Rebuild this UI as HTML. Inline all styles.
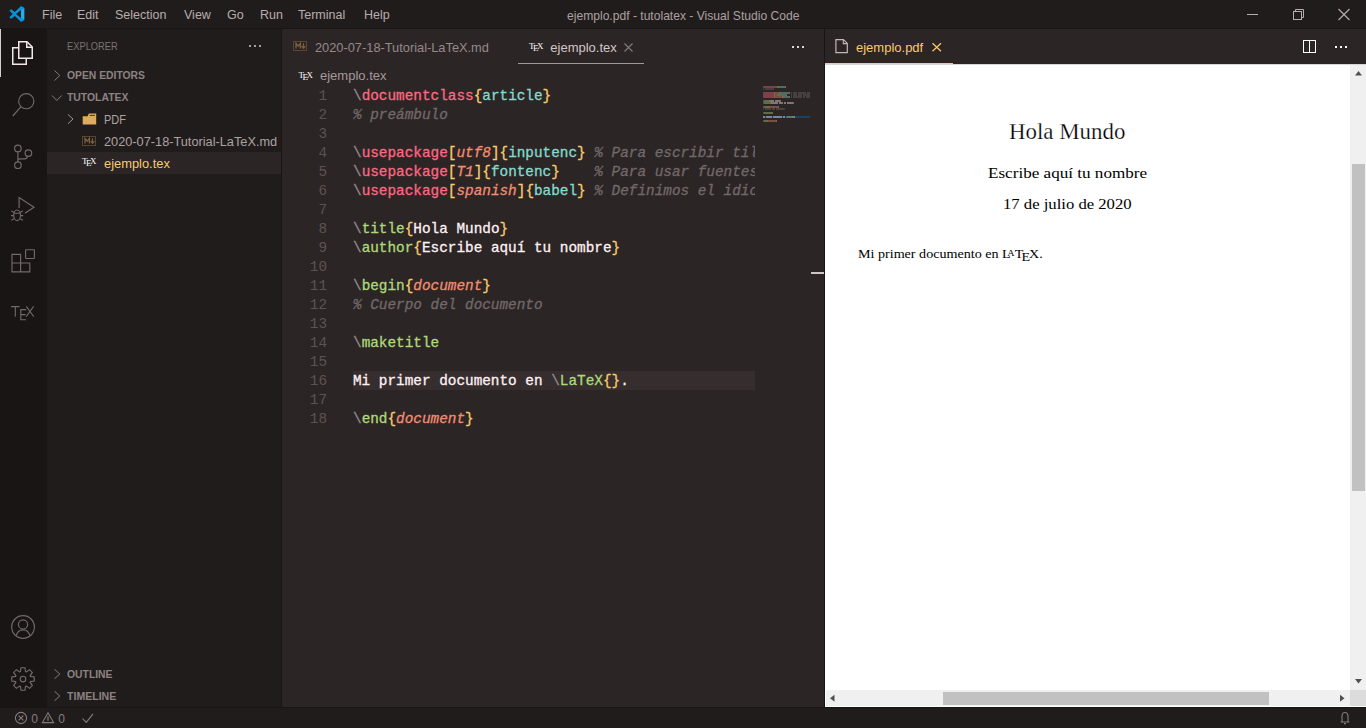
<!DOCTYPE html>
<html><head><meta charset="utf-8">
<style>
*{margin:0;padding:0;box-sizing:border-box}
html,body{width:1366px;height:728px;overflow:hidden;background:#211c1c;font-family:"Liberation Sans",sans-serif;}
.a{position:absolute;white-space:pre}
.mono{font-family:"Liberation Mono",monospace}
.cb .mono{-webkit-text-stroke:0.3px currentColor}
.serif{font-family:"Liberation Serif",serif}
svg{position:absolute;overflow:visible}
</style></head><body>
<!-- title bar -->
<div class="a" style="left:0;top:0;width:1366px;height:28px;background:#211c1c"></div>
<div class="a" style="left:0;top:28px;width:1366px;height:1px;background:#191515"></div>
<!-- activity bar -->
<div class="a" style="left:0;top:29px;width:47px;height:678px;background:#191515"></div>
<!-- sidebar -->
<div class="a" style="left:47px;top:29px;width:234px;height:678px;background:#211c1c"></div>
<div class="a" style="left:281px;top:29px;width:1px;height:678px;background:#191515"></div>
<!-- editor group 1 -->
<div class="a" style="left:282px;top:29px;width:542px;height:678px;background:#2c2525"></div>
<div class="a" style="left:824px;top:29px;width:1px;height:678px;background:#191515"></div>
<!-- editor group 2 -->
<div class="a" style="left:825px;top:29px;width:541px;height:35px;background:#2c2525"></div>
<div class="a" style="left:825px;top:64px;width:541px;height:643px;background:#ffffff"></div>
<!-- status bar -->
<div class="a" style="left:0;top:707px;width:1366px;height:1px;background:#191515"></div>
<div class="a" style="left:0;top:708px;width:1366px;height:20px;background:#211c1c"></div>

<!-- TITLE CONTENT -->
<svg style="left:9px;top:6px" width="16" height="16" viewBox="0 0 100 100">
 <path d="M74 2 L96 12 V88 L74 98 Z" fill="#23aef0"/>
 <path d="M74 2 L96 12 L36 62 L14 79 L4 73 L4 68 Z" fill="#0a93db"/>
 <path d="M74 98 L96 88 L36 38 L14 21 L4 27 L4 32 Z" fill="#0c8fd6"/>
 <path d="M74 25 L74 75 L44 50 Z" fill="#211c1c"/>
</svg>
<div class="a" style="left:42px;top:8px;font-size:12.5px;color:#b8adae">File</div>
<div class="a" style="left:77px;top:8px;font-size:12.5px;color:#b8adae">Edit</div>
<div class="a" style="left:115px;top:8px;font-size:12.5px;color:#b8adae">Selection</div>
<div class="a" style="left:184px;top:8px;font-size:12.5px;color:#b8adae">View</div>
<div class="a" style="left:227px;top:8px;font-size:12.5px;color:#b8adae">Go</div>
<div class="a" style="left:260px;top:8px;font-size:12.5px;color:#b8adae">Run</div>
<div class="a" style="left:298px;top:8px;font-size:12.5px;color:#b8adae">Terminal</div>
<div class="a" style="left:364px;top:8px;font-size:12.5px;color:#b8adae">Help</div>
<div class="a" style="left:567px;top:9px;font-size:12.1px;color:#aca1a2">ejemplo.pdf - tutolatex - Visual Studio Code</div>
<div class="a" style="left:1247px;top:14px;width:11px;height:1px;background:#b8adae"></div>
<svg style="left:1292px;top:8px" width="13" height="13" viewBox="0 0 13 13" fill="none" stroke="#b8adae" stroke-width="1">
 <rect x="1.5" y="3.5" width="8" height="8"/><path d="M3.5 3.5 V1.5 H11.5 V9.5 H9.5"/>
</svg>
<svg style="left:1338px;top:9px" width="12" height="11" viewBox="0 0 12 11" stroke="#b8adae" stroke-width="1.1">
 <path d="M0.5 0 L11.5 11 M11.5 0 L0.5 11"/>
</svg>

<!-- ACTIVITY BAR -->
<div class="a" style="left:0;top:29px;width:1px;height:48px;background:#d8cdce"></div>
<svg style="left:0;top:0" width="47" height="728" viewBox="0 0 47 728" fill="none" stroke-linejoin="miter">
 <g stroke="#f4e6e8" stroke-width="1.5">
  <path d="M18.75 41.75 H27 L32.25 47 V58.25 H18.75 Z"/>
  <path d="M26.75 42 V47.25 H32"/>
  <path d="M18.75 47.75 H12.75 V64.25 H26.25 V58.5"/>
 </g>
 <g stroke="#74696b" stroke-width="1.15">
  <circle cx="26.25" cy="101.2" r="7.6"/>
  <path d="M20.8 106.8 L12.8 116"/>
  <circle cx="17.9" cy="148.4" r="3.3"/>
  <circle cx="17.9" cy="165.2" r="3.3"/>
  <circle cx="28.4" cy="153.1" r="3.3"/>
  <path d="M17.9 151.7 V161.9"/>
  <path d="M17.9 159.6 Q18.5 158.8 20.5 158.8 H24.5 Q27 158.8 27.6 156.3"/>
  <path d="M19.1 208 V197.6 L34 207.2 L24.9 213.2"/>
  <ellipse cx="17.1" cy="215.3" rx="3.4" ry="5.3"/>
  <path d="M13.8 213.2 H20.4 M11.3 211 L14 212.3 M22.9 211 L20.2 212.3 M11 215.6 H13.7 M23.2 215.6 H20.5 M11.3 220.3 L14 218.8 M22.9 220.3 L20.2 218.8"/>
  <rect x="25.6" y="249.7" width="8.8" height="8.8" rx="0.8"/>
  <path d="M12 254.3 H20.6 V271.8 H12 Z M12 263 H29.8 V271.8 H20.6"/>
  <circle cx="23.05" cy="627" r="11.35"/>
  <circle cx="23.05" cy="624.4" r="4.6"/>
  <path d="M16.2 635.6 Q17.8 629.8 23.05 629.8 Q28.3 629.8 29.9 635.6"/>
  <path d="M20.43 671.53 L21.02 667.77 L24.98 667.77 L25.57 671.53 L26.46 671.90 L29.54 669.66 L32.34 672.46 L30.10 675.54 L30.47 676.43 L34.23 677.02 L34.23 680.98 L30.47 681.57 L30.10 682.46 L32.34 685.54 L29.54 688.34 L26.46 686.10 L25.57 686.47 L24.98 690.23 L21.02 690.23 L20.43 686.47 L19.54 686.10 L16.46 688.34 L13.66 685.54 L15.90 682.46 L15.53 681.57 L11.77 680.98 L11.77 677.02 L15.53 676.43 L15.90 675.54 L13.66 672.46 L16.46 669.66 L19.54 671.90 Z"/>
  <circle cx="23" cy="679" r="2.8"/>
 </g>
 <g stroke="#72696a" stroke-width="1.1">
  <path d="M11.1 306.6 H19.5 M15.3 306.6 V316.8"/>
  <path d="M26.2 309.6 H20.8 V319.7 H26.2 M20.8 314.6 H25.6"/>
  <path d="M26.3 306.4 L33.8 316.8 M33.6 306.4 L26.1 316.8"/>
 </g>
</svg>

<!-- SIDEBAR -->
<div class="a" style="left:67px;top:40px;font-size:11.5px;color:#7c7273;transform:scaleX(0.81);transform-origin:0 0">EXPLORER</div>
<div class="a" style="left:249px;top:45px;width:2px;height:2px;background:#a99e9f"></div>
<div class="a" style="left:254px;top:45px;width:2px;height:2px;background:#a99e9f"></div>
<div class="a" style="left:259px;top:45px;width:2px;height:2px;background:#a99e9f"></div>
<svg style="left:0;top:0" width="300" height="728" viewBox="0 0 300 728" fill="none">
 <g stroke="#857b7c" stroke-width="1">
  <path d="M54.5 70.5 L59.8 75.5 L54.5 80.5"/>
  <path d="M52 95.5 L56.8 100.5 L61.6 95.5"/>
  <path d="M54.5 669.3 L59.8 674 L54.5 678.7"/>
  <path d="M54.5 691.3 L59.8 696 L54.5 700.7"/>
 </g>
 <path d="M68 114.5 L73 119 L68 123.7" stroke="#9d9293" stroke-width="1"/>
 <path d="M82.7 116.2 H87.6 L88.8 113.6 H96.2 V124.4 H82.7 Z" fill="#dcab5f"/>
 <path d="M89.6 115.4 H95" stroke="#211c1c" stroke-width="0.8"/>
 <rect x="82.5" y="136.5" width="13" height="9" stroke="#5a4630" stroke-width="1"/>
</svg>
<svg style="left:0;top:0" width="300" height="200" viewBox="0 0 300 200" fill="none"><path d="M85 143.6 V138.4 L87.2 141.2 L89.4 138.4 V143.6" stroke="#7a6140" stroke-width="1.3"/><path d="M92.5 138.2 V143 M90.6 141.2 L92.5 143.4 L94.4 141.2" stroke="#7a6140" stroke-width="1.2"/></svg>
<div class="a" style="left:67px;top:69px;font-size:11px;font-weight:bold;color:#8c8283;transform:scaleX(0.94);transform-origin:0 0">OPEN EDITORS</div>
<div class="a" style="left:67px;top:91px;font-size:11px;font-weight:bold;color:#8c8283;transform:scaleX(0.945);transform-origin:0 0">TUTOLATEX</div>
<div class="a" style="left:103.5px;top:112.5px;font-size:12.5px;color:#ada2a3;transform:scaleX(0.88);transform-origin:0 0">PDF</div>
<div class="a" style="left:103.5px;top:134.5px;font-size:12.5px;color:#ada2a3;transform:scaleX(1.02);transform-origin:0 0">2020-07-18-Tutorial-LaTeX.md</div>
<div class="a" style="left:47px;top:152px;width:234px;height:22px;background:#2c2525"></div>
<div class="a" style="left:103.5px;top:156.5px;font-size:12.5px;color:#f9cc6c;transform:scaleX(1.03);transform-origin:0 0">ejemplo.tex</div>
<div class="a serif" style="left:82px;top:156px;font-size:9px;color:#ffffff">T<span style="position:relative;top:2px;margin-left:-1.5px">E</span><span style="margin-left:-1.5px">X</span></div>
<div class="a" style="left:67px;top:668px;font-size:11px;font-weight:bold;color:#8c8283;transform:scaleX(0.943);transform-origin:0 0">OUTLINE</div>
<div class="a" style="left:67px;top:690px;font-size:11px;font-weight:bold;color:#8c8283;transform:scaleX(0.96);transform-origin:0 0">TIMELINE</div>

<!-- EDITOR 1 TABS -->
<svg style="left:0;top:0" width="1366" height="100" viewBox="0 0 1366 100" fill="none">
 <rect x="293.5" y="41.5" width="13" height="9" stroke="#5a4630" stroke-width="1"/>
 <path d="M296 48.6 V43.4 L298.2 46.2 L300.4 43.4 V48.6" stroke="#7a6140" stroke-width="1.3"/>
 <path d="M303.5 43.2 V48 M301.6 46.2 L303.5 48.4 L305.4 46.2" stroke="#7a6140" stroke-width="1.2"/>
 <path d="M624.5 43.5 L632.5 51.5 M632.5 43.5 L624.5 51.5" stroke="#847a7b" stroke-width="1.1"/>
 <path d="M835.9 39.6 H843.5 L847.3 43.4 V52.6 H835.9 Z" stroke="#c3b7b8" stroke-width="1.2"/>
 <path d="M843.3 39.8 V43.6 H847.1" stroke="#c3b7b8" stroke-width="1.1"/>
 <path d="M932.5 43.2 L941 51.2 M941 43.2 L932.5 51.2" stroke="#f9cc6c" stroke-width="1.2"/>
 <rect x="1303.5" y="40.5" width="12" height="12" stroke="#ffffff" stroke-width="1"/>
 <path d="M1309.5 40.5 V52.5" stroke="#ffffff" stroke-width="1"/>
</svg>
<div class="a" style="left:314.5px;top:40px;font-size:13px;color:#948a8b;transform:scaleX(0.985);transform-origin:0 0">2020-07-18-Tutorial-LaTeX.md</div>
<div class="a serif" style="left:529px;top:40.5px;font-size:9px;color:#ffffff">T<span style="position:relative;top:2px;margin-left:-1.5px">E</span><span style="margin-left:-1.5px">X</span></div>
<div class="a" style="left:550.3px;top:40px;font-size:13px;color:#d3c7c8">ejemplo.tex</div>
<div class="a" style="left:518px;top:63px;width:126px;height:1px;background:#9f9798"></div>
<div class="a" style="left:792px;top:46px;width:2px;height:2px;background:#e0d4d5"></div>
<div class="a" style="left:797px;top:46px;width:2px;height:2px;background:#e0d4d5"></div>
<div class="a" style="left:802px;top:46px;width:2px;height:2px;background:#e0d4d5"></div>
<div class="a serif" style="left:298.5px;top:69.5px;font-size:9px;color:#ffffff">T<span style="position:relative;top:2px;margin-left:-1.5px">E</span><span style="margin-left:-1.5px">X</span></div>
<div class="a" style="left:320px;top:68px;font-size:13px;color:#a3989a">ejemplo.tex</div>
<!-- EDITOR 2 TABS -->
<div class="a" style="left:856px;top:40px;font-size:13px;color:#f9cc6c">ejemplo.pdf</div>
<div class="a" style="left:825px;top:63px;width:128px;height:1px;background:#f9cc6c"></div>
<div class="a" style="left:1335px;top:46px;width:2px;height:2px;background:#ffffff"></div>
<div class="a" style="left:1340px;top:46px;width:2px;height:2px;background:#ffffff"></div>
<div class="a" style="left:1345px;top:46px;width:2px;height:2px;background:#ffffff"></div>

<!-- CODE -->
<div class="a" style="left:353px;top:371px;width:402px;height:19px;background:#362e2e"></div>
<div class="a mono" style="left:300px;top:87px;width:27px;text-align:right;font-size:14.37px;line-height:19px;color:#5b5353">1</div>
<div class="a mono" style="left:300px;top:106px;width:27px;text-align:right;font-size:14.37px;line-height:19px;color:#5b5353">2</div>
<div class="a mono" style="left:300px;top:125px;width:27px;text-align:right;font-size:14.37px;line-height:19px;color:#5b5353">3</div>
<div class="a mono" style="left:300px;top:144px;width:27px;text-align:right;font-size:14.37px;line-height:19px;color:#5b5353">4</div>
<div class="a mono" style="left:300px;top:163px;width:27px;text-align:right;font-size:14.37px;line-height:19px;color:#5b5353">5</div>
<div class="a mono" style="left:300px;top:182px;width:27px;text-align:right;font-size:14.37px;line-height:19px;color:#5b5353">6</div>
<div class="a mono" style="left:300px;top:201px;width:27px;text-align:right;font-size:14.37px;line-height:19px;color:#5b5353">7</div>
<div class="a mono" style="left:300px;top:220px;width:27px;text-align:right;font-size:14.37px;line-height:19px;color:#5b5353">8</div>
<div class="a mono" style="left:300px;top:239px;width:27px;text-align:right;font-size:14.37px;line-height:19px;color:#5b5353">9</div>
<div class="a mono" style="left:300px;top:258px;width:27px;text-align:right;font-size:14.37px;line-height:19px;color:#5b5353">10</div>
<div class="a mono" style="left:300px;top:277px;width:27px;text-align:right;font-size:14.37px;line-height:19px;color:#5b5353">11</div>
<div class="a mono" style="left:300px;top:296px;width:27px;text-align:right;font-size:14.37px;line-height:19px;color:#5b5353">12</div>
<div class="a mono" style="left:300px;top:315px;width:27px;text-align:right;font-size:14.37px;line-height:19px;color:#5b5353">13</div>
<div class="a mono" style="left:300px;top:334px;width:27px;text-align:right;font-size:14.37px;line-height:19px;color:#5b5353">14</div>
<div class="a mono" style="left:300px;top:353px;width:27px;text-align:right;font-size:14.37px;line-height:19px;color:#5b5353">15</div>
<div class="a mono" style="left:300px;top:372px;width:27px;text-align:right;font-size:14.37px;line-height:19px;color:#5b5353">16</div>
<div class="a mono" style="left:300px;top:391px;width:27px;text-align:right;font-size:14.37px;line-height:19px;color:#5b5353">17</div>
<div class="a mono" style="left:300px;top:410px;width:27px;text-align:right;font-size:14.37px;line-height:19px;color:#5b5353">18</div>
<div class="a cb" style="left:353px;top:87px;width:402px;height:400px;overflow:hidden">
<div class="a mono" style="left:0;top:0px;font-size:14.37px;line-height:19px"><span style="color:#948a8b">\</span><span style="color:#fd6883">documentclass</span><span style="color:#f9cc6c">{</span><span style="color:#85dacc">article</span><span style="color:#f9cc6c">}</span></div>
<div class="a mono" style="left:0;top:19px;font-size:14.37px;line-height:19px"><span style="color:#72696a;font-style:italic">% preámbulo</span></div>
<div class="a mono" style="left:0;top:38px;font-size:14.37px;line-height:19px"></div>
<div class="a mono" style="left:0;top:57px;font-size:14.37px;line-height:19px"><span style="color:#948a8b">\</span><span style="color:#fd6883">usepackage</span><span style="color:#f9cc6c">[</span><span style="color:#f38d70;font-style:italic">utf8</span><span style="color:#f9cc6c">]</span><span style="color:#f9cc6c">{</span><span style="color:#85dacc">inputenc</span><span style="color:#f9cc6c">}</span> <span style="color:#72696a;font-style:italic">% Para escribir tildes</span></div>
<div class="a mono" style="left:0;top:76px;font-size:14.37px;line-height:19px"><span style="color:#948a8b">\</span><span style="color:#fd6883">usepackage</span><span style="color:#f9cc6c">[</span><span style="color:#f38d70;font-style:italic">T1</span><span style="color:#f9cc6c">]</span><span style="color:#f9cc6c">{</span><span style="color:#85dacc">fontenc</span><span style="color:#f9cc6c">}</span>    <span style="color:#72696a;font-style:italic">% Para usar fuentes</span></div>
<div class="a mono" style="left:0;top:95px;font-size:14.37px;line-height:19px"><span style="color:#948a8b">\</span><span style="color:#fd6883">usepackage</span><span style="color:#f9cc6c">[</span><span style="color:#f38d70;font-style:italic">spanish</span><span style="color:#f9cc6c">]</span><span style="color:#f9cc6c">{</span><span style="color:#85dacc">babel</span><span style="color:#f9cc6c">}</span> <span style="color:#72696a;font-style:italic">% Definimos el idioma</span></div>
<div class="a mono" style="left:0;top:114px;font-size:14.37px;line-height:19px"></div>
<div class="a mono" style="left:0;top:133px;font-size:14.37px;line-height:19px"><span style="color:#948a8b">\</span><span style="color:#adda78">title</span><span style="color:#f9cc6c">{</span><span style="color:#fff1f3">Hola Mundo</span><span style="color:#f9cc6c">}</span></div>
<div class="a mono" style="left:0;top:152px;font-size:14.37px;line-height:19px"><span style="color:#948a8b">\</span><span style="color:#adda78">author</span><span style="color:#f9cc6c">{</span><span style="color:#fff1f3">Escribe aquí tu nombre</span><span style="color:#f9cc6c">}</span></div>
<div class="a mono" style="left:0;top:171px;font-size:14.37px;line-height:19px"></div>
<div class="a mono" style="left:0;top:190px;font-size:14.37px;line-height:19px"><span style="color:#948a8b">\</span><span style="color:#adda78">begin</span><span style="color:#f9cc6c">{</span><span style="color:#f38d70;font-style:italic">document</span><span style="color:#f9cc6c">}</span></div>
<div class="a mono" style="left:0;top:209px;font-size:14.37px;line-height:19px"><span style="color:#72696a;font-style:italic">% Cuerpo del documento</span></div>
<div class="a mono" style="left:0;top:228px;font-size:14.37px;line-height:19px"></div>
<div class="a mono" style="left:0;top:247px;font-size:14.37px;line-height:19px"><span style="color:#948a8b">\</span><span style="color:#adda78">maketitle</span></div>
<div class="a mono" style="left:0;top:266px;font-size:14.37px;line-height:19px"></div>
<div class="a mono" style="left:0;top:285px;font-size:14.37px;line-height:19px"><span style="color:#fff1f3">Mi primer documento en </span><span style="color:#948a8b">\</span><span style="color:#adda78">LaTeX</span><span style="color:#f9cc6c">{}</span><span style="color:#fff1f3">.</span></div>
<div class="a mono" style="left:0;top:304px;font-size:14.37px;line-height:19px"></div>
<div class="a mono" style="left:0;top:323px;font-size:14.37px;line-height:19px"><span style="color:#948a8b">\</span><span style="color:#adda78">end</span><span style="color:#f9cc6c">{</span><span style="color:#f38d70;font-style:italic">document</span><span style="color:#f9cc6c">}</span></div>
</div>

<!-- MINIMAP -->
<div class="a" style="left:763px;top:80px;width:47px;height:50px;overflow:hidden"><svg style="left:0;top:0" width="47" height="50" viewBox="763 80 47 50">
<rect x="763" y="116" width="47" height="2" fill="#1e4468" opacity="0.9"/>
<rect x="763" y="86" width="1" height="2" fill="#948a8b" opacity="0.4"/><rect x="764" y="86" width="13" height="2" fill="#fd6883" opacity="0.4"/><rect x="777" y="86" width="1" height="2" fill="#f9cc6c" opacity="0.4"/><rect x="778" y="86" width="7" height="2" fill="#85dacc" opacity="0.4"/><rect x="785" y="86" width="1" height="2" fill="#f9cc6c" opacity="0.4"/>
<rect x="763" y="88" width="1" height="2" fill="#72696a" opacity="0.4"/><rect x="765" y="88" width="9" height="2" fill="#72696a" opacity="0.4"/>

<rect x="763" y="92" width="1" height="2" fill="#948a8b" opacity="0.4"/><rect x="764" y="92" width="10" height="2" fill="#fd6883" opacity="0.4"/><rect x="774" y="92" width="1" height="2" fill="#f9cc6c" opacity="0.4"/><rect x="775" y="92" width="4" height="2" fill="#f38d70" opacity="0.4"/><rect x="779" y="92" width="1" height="2" fill="#f9cc6c" opacity="0.4"/><rect x="780" y="92" width="1" height="2" fill="#f9cc6c" opacity="0.4"/><rect x="781" y="92" width="8" height="2" fill="#85dacc" opacity="0.4"/><rect x="789" y="92" width="1" height="2" fill="#f9cc6c" opacity="0.4"/><rect x="791" y="92" width="1" height="2" fill="#72696a" opacity="0.4"/><rect x="793" y="92" width="4" height="2" fill="#72696a" opacity="0.4"/><rect x="798" y="92" width="8" height="2" fill="#72696a" opacity="0.4"/><rect x="807" y="92" width="6" height="2" fill="#72696a" opacity="0.4"/>
<rect x="763" y="94" width="1" height="2" fill="#948a8b" opacity="0.4"/><rect x="764" y="94" width="10" height="2" fill="#fd6883" opacity="0.4"/><rect x="774" y="94" width="1" height="2" fill="#f9cc6c" opacity="0.4"/><rect x="775" y="94" width="2" height="2" fill="#f38d70" opacity="0.4"/><rect x="777" y="94" width="1" height="2" fill="#f9cc6c" opacity="0.4"/><rect x="778" y="94" width="1" height="2" fill="#f9cc6c" opacity="0.4"/><rect x="779" y="94" width="7" height="2" fill="#85dacc" opacity="0.4"/><rect x="786" y="94" width="1" height="2" fill="#f9cc6c" opacity="0.4"/><rect x="791" y="94" width="1" height="2" fill="#72696a" opacity="0.4"/><rect x="793" y="94" width="4" height="2" fill="#72696a" opacity="0.4"/><rect x="798" y="94" width="4" height="2" fill="#72696a" opacity="0.4"/><rect x="803" y="94" width="7" height="2" fill="#72696a" opacity="0.4"/>
<rect x="763" y="96" width="1" height="2" fill="#948a8b" opacity="0.4"/><rect x="764" y="96" width="10" height="2" fill="#fd6883" opacity="0.4"/><rect x="774" y="96" width="1" height="2" fill="#f9cc6c" opacity="0.4"/><rect x="775" y="96" width="7" height="2" fill="#f38d70" opacity="0.4"/><rect x="782" y="96" width="1" height="2" fill="#f9cc6c" opacity="0.4"/><rect x="783" y="96" width="1" height="2" fill="#f9cc6c" opacity="0.4"/><rect x="784" y="96" width="5" height="2" fill="#85dacc" opacity="0.4"/><rect x="789" y="96" width="1" height="2" fill="#f9cc6c" opacity="0.4"/><rect x="791" y="96" width="1" height="2" fill="#72696a" opacity="0.4"/><rect x="793" y="96" width="9" height="2" fill="#72696a" opacity="0.4"/><rect x="803" y="96" width="2" height="2" fill="#72696a" opacity="0.4"/><rect x="806" y="96" width="6" height="2" fill="#72696a" opacity="0.4"/>

<rect x="763" y="100" width="1" height="2" fill="#948a8b" opacity="0.4"/><rect x="764" y="100" width="5" height="2" fill="#adda78" opacity="0.4"/><rect x="769" y="100" width="1" height="2" fill="#f9cc6c" opacity="0.4"/><rect x="770" y="100" width="4" height="2" fill="#fff1f3" opacity="0.4"/><rect x="775" y="100" width="5" height="2" fill="#fff1f3" opacity="0.4"/><rect x="780" y="100" width="1" height="2" fill="#f9cc6c" opacity="0.4"/>
<rect x="763" y="102" width="1" height="2" fill="#948a8b" opacity="0.4"/><rect x="764" y="102" width="6" height="2" fill="#adda78" opacity="0.4"/><rect x="770" y="102" width="1" height="2" fill="#f9cc6c" opacity="0.4"/><rect x="771" y="102" width="7" height="2" fill="#fff1f3" opacity="0.4"/><rect x="779" y="102" width="4" height="2" fill="#fff1f3" opacity="0.4"/><rect x="784" y="102" width="2" height="2" fill="#fff1f3" opacity="0.4"/><rect x="787" y="102" width="6" height="2" fill="#fff1f3" opacity="0.4"/><rect x="793" y="102" width="1" height="2" fill="#f9cc6c" opacity="0.4"/>

<rect x="763" y="106" width="1" height="2" fill="#948a8b" opacity="0.4"/><rect x="764" y="106" width="5" height="2" fill="#adda78" opacity="0.4"/><rect x="769" y="106" width="1" height="2" fill="#f9cc6c" opacity="0.4"/><rect x="770" y="106" width="8" height="2" fill="#f38d70" opacity="0.4"/><rect x="778" y="106" width="1" height="2" fill="#f9cc6c" opacity="0.4"/>
<rect x="763" y="108" width="1" height="2" fill="#72696a" opacity="0.4"/><rect x="765" y="108" width="6" height="2" fill="#72696a" opacity="0.4"/><rect x="772" y="108" width="3" height="2" fill="#72696a" opacity="0.4"/><rect x="776" y="108" width="9" height="2" fill="#72696a" opacity="0.4"/>

<rect x="763" y="112" width="1" height="2" fill="#948a8b" opacity="0.4"/><rect x="764" y="112" width="9" height="2" fill="#adda78" opacity="0.4"/>

<rect x="763" y="116" width="2" height="2" fill="#fff1f3" opacity="0.4"/><rect x="766" y="116" width="6" height="2" fill="#fff1f3" opacity="0.4"/><rect x="773" y="116" width="9" height="2" fill="#fff1f3" opacity="0.4"/><rect x="783" y="116" width="2" height="2" fill="#fff1f3" opacity="0.4"/><rect x="786" y="116" width="1" height="2" fill="#948a8b" opacity="0.4"/><rect x="787" y="116" width="5" height="2" fill="#adda78" opacity="0.4"/><rect x="792" y="116" width="2" height="2" fill="#f9cc6c" opacity="0.4"/><rect x="794" y="116" width="1" height="2" fill="#fff1f3" opacity="0.4"/>

<rect x="763" y="120" width="1" height="2" fill="#948a8b" opacity="0.4"/><rect x="764" y="120" width="3" height="2" fill="#adda78" opacity="0.4"/><rect x="767" y="120" width="1" height="2" fill="#f9cc6c" opacity="0.4"/><rect x="768" y="120" width="8" height="2" fill="#f38d70" opacity="0.4"/><rect x="776" y="120" width="1" height="2" fill="#f9cc6c" opacity="0.4"/>
</svg></div>
<div class="a" style="left:811px;top:272px;width:13px;height:2px;background:#d0c4c5"></div>

<!-- PDF -->
<div class="a serif" style="left:1008.5px;top:118.5px;font-size:23px;color:#000;-webkit-text-stroke:0.25px #fff;transform:scaleX(0.995);transform-origin:0 0">Hola Mundo</div>
<div class="a serif" style="left:987.5px;top:165px;font-size:15px;color:#000;transform:scaleX(1.14);transform-origin:0 0">Escribe aquí tu nombre</div>
<div class="a serif" style="left:1003px;top:195.5px;font-size:15px;color:#000;transform:scaleX(1.11);transform-origin:0 0">17 de julio de 2020</div>
<div class="a serif" style="left:858px;top:247px;font-size:12.5px;color:#000;transform:scaleX(1.128);transform-origin:0 0">Mi primer documento en L<span style="font-size:9px;position:relative;top:-2.5px;margin-left:-3px">A</span>T<span style="position:relative;top:2.5px;margin-left:-1.5px">E</span><span style="margin-left:-1px">X.</span></div>
<!-- scrollbars -->
<div class="a" style="left:1350px;top:64px;width:16px;height:626px;background:#f0f0f0"></div>
<div class="a" style="left:825px;top:64px;width:541px;height:1px;background:#d6d6d8"></div>
<div class="a" style="left:1352px;top:164px;width:13px;height:327px;background:#c1c1c1"></div>
<div class="a" style="left:826px;top:690px;width:524px;height:16px;background:#f0f0f0"></div>
<div class="a" style="left:943px;top:692px;width:326px;height:13px;background:#c1c1c1"></div>
<div class="a" style="left:1350px;top:690px;width:16px;height:16px;background:#dcdcdc"></div>
<svg style="left:0;top:0" width="1366" height="728" viewBox="0 0 1366 728">
 <path d="M1355 75.5 L1358.5 71 L1362 75.5 Z" fill="#505050"/>
 <path d="M1355 679 L1358.5 683.5 L1362 679 Z" fill="#505050"/>
 <path d="M834.5 694.8 L830 698.3 L834.5 701.8 Z" fill="#505050"/>
 <path d="M1340 694.8 L1344.5 698.3 L1340 701.8 Z" fill="#505050"/>
</svg>
<div class="a" style="left:825px;top:706px;width:541px;height:1px;background:#ffffff"></div>

<!-- STATUS BAR -->
<svg style="left:0;top:0" width="1366" height="728" viewBox="0 0 1366 728" fill="none">
 <g stroke="#857b7c" stroke-width="1.1">
  <circle cx="21" cy="718" r="5.6"/>
  <path d="M18.6 715.6 L23.4 720.4 M23.4 715.6 L18.6 720.4"/>
  <path d="M48 712.8 L53.6 722.6 H42.4 Z"/>
  <path d="M48 716.5 V720.8" stroke-width="1.3"/>
  <path d="M82.6 718.6 L86.3 722.3 L93 713.8"/>
  <path d="M1342 722 V716.5 Q1342 712.5 1345 712.5 Q1348 712.5 1348 716.5 V722 H1342 M1340.5 722 H1349.5 M1344 723.6 H1346"/>
 </g>
</svg>
<div class="a" style="left:31.3px;top:712px;font-size:12px;color:#857b7c">0</div>
<div class="a" style="left:58.2px;top:712px;font-size:12px;color:#857b7c">0</div>
</body></html>
